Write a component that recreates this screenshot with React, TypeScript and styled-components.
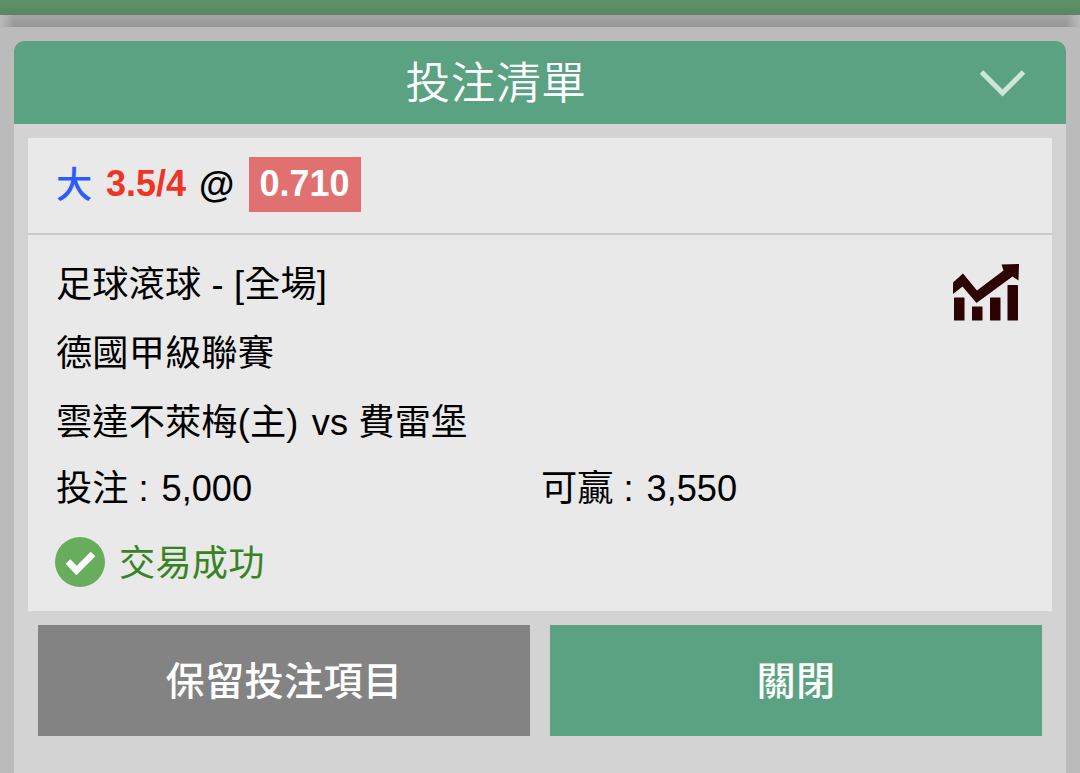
import React from 'react'
import styled, { createGlobalStyle } from 'styled-components'

const GlobalStyle = createGlobalStyle`
  * {
    box-sizing: border-box;
  }
  body {
    margin: 0;
    background: #bbb;
    color: #000;
    font-family: 'Liberation Sans', 'Noto Sans CJK TC', sans-serif;
  }
`

const Page = styled.div`
  height: 773px;
  overflow: hidden;
  display: flex;
  flex-direction: column;
`

const TopBar = styled.div`
  flex: none;
  height: 15px;
  background: linear-gradient(#5f9368, #588663);
`

const TopShadow = styled.div`
  flex: none;
  height: 12px;
  background: linear-gradient(90deg, #bbb 0, rgba(187, 187, 187, 0) 14px),
    linear-gradient(270deg, #bbb 0, rgba(187, 187, 187, 0) 14px),
    linear-gradient(#a5a5a5, #969696);
`

const Panel = styled.section`
  flex: 1;
  margin: 14px 14px 0;
  border-radius: 10px 10px 0 0;
  overflow: hidden;
  background: #d3d3d3;
`

const Header = styled.header`
  height: 83px;
  padding: 0 40px 0 0;
  display: flex;
  align-items: center;
  background: #5ba283;
  color: #fff;
`

const Title = styled.h1`
  flex: 1;
  margin: 0;
  padding-top: 1px;
  text-align: center;
  font-size: 44.6px;
  font-weight: 350;
  letter-spacing: 0.6px;
  line-height: 83px;
`

const Card = styled.div`
  height: 473px;
  margin: 14px 14px 0;
  background: #e9e9e9;
  font-size: 36.2px;
`

const Selection = styled.div`
  height: 97px;
  padding: 19px 28px 0;
  display: flex;
  align-items: flex-start;
  border-bottom: 2px solid #cbcbcb;
  line-height: 54px;
`

const Pick = styled.span`
  width: 50px;
  padding-top: 2px;
  color: #2a5cff;
  font-weight: 500;
`

const Handicap = styled.span`
  width: 93px;
  color: #ee3424;
  font-size: 36px;
  font-weight: bold;
`

const At = styled.span`
  width: 50px;
  padding-top: 1px;
  font-weight: bold;
`

const Odds = styled.span`
  width: 112px;
  height: 55px;
  padding-right: 1px;
  background: #e17070;
  color: #fff;
  font-size: 36px;
  font-weight: bold;
  text-align: center;
`

const Details = styled.div`
  padding: 11px 28px 0;
  display: flex;
  justify-content: space-between;
`

const Lines = styled.div`
  flex: 1;
  min-width: 0;
`

const Line = styled.div`
  display: flex;
  align-items: center;
  height: 69px;
  letter-spacing: 0.15px;
  white-space: pre;
`

const Away = styled.span`
  margin-left: 3px;
`

const Amounts = styled(Line)`
  height: 63px;
  letter-spacing: 0;
`

const Amount = styled.span`
  flex: none;
  width: 485px;

  &:last-child {
    width: auto;
  }

  b {
    margin-left: 3px;
    font-weight: normal;
  }
`

const Status = styled.div`
  display: flex;
  align-items: center;
  gap: 14px;
  height: 92px;
  color: #37831f;
  letter-spacing: 0.2px;

  span {
    padding-bottom: 4px;
  }
`

const ChartIcon = styled.svg`
  flex: none;
  margin: 18px 4px 0 0;
`

const CheckIcon = styled.svg`
  flex: none;
  margin-left: -1px;
`

const Actions = styled.div`
  display: flex;
  gap: 20px;
  padding: 14px 24px 0;
`

const Button = styled.button<{ $primary?: boolean }>`
  flex: 1;
  height: 111px;
  padding: 0 0 6px;
  border: 0;
  background: ${({ $primary }) => ($primary ? '#5ba283' : '#838383')};
  color: #fff;
  font-family: inherit;
  font-size: 39.2px;
  font-weight: 500;
  letter-spacing: 0.3px;
`

export default function App() {
  return (
    <>
      <GlobalStyle />
      <Page>
        <TopBar />
        <TopShadow />
        <Panel>
          <Header>
            <Title>投注清單</Title>
            <svg width="48" height="28" viewBox="0 0 48 28" fill="none">
              <path d="M3.5 3 L24.5 24 L45.5 3" stroke="#cfe5da" strokeWidth="5" />
            </svg>
          </Header>
          <Card>
            <Selection>
              <Pick>大</Pick>
              <Handicap>3.5/4</Handicap>
              <At>@</At>
              <Odds>0.710</Odds>
            </Selection>
            <Details>
              <Lines>
                <Line>足球滾球 - [全場]</Line>
                <Line>德國甲級聯賽</Line>
                <Line>
                  雲達不萊梅(主)<Away> vs 費雷堡</Away>
                </Line>
                <Amounts>
                  <Amount>
                    投注 :<b> 5,000</b>
                  </Amount>
                  <Amount>
                    可贏 :<b> 3,550</b>
                  </Amount>
                </Amounts>
                <Status>
                  <CheckIcon width="50" height="50" viewBox="0 0 50 50">
                    <circle cx="25" cy="25" r="25" fill="#67ad5b" />
                    <path d="M13 24.5 L21.5 33.5 L38 17" fill="none" stroke="#fff" strokeWidth="6.5" />
                  </CheckIcon>
                  <span>交易成功</span>
                </Status>
              </Lines>
              <ChartIcon width="67" height="58" viewBox="0 0 67 58" fill="#2c0302">
                <path d="M0 18.5 L10 9.5 L24 26.5 L50.5 6.5 L48.5 0.5 L66 0 L65.5 16.5 L59.5 12.5 L23.5 39 L9.5 22.5 L0 30 Z" />
                <rect x="1" y="33.5" width="10.5" height="23" rx="0.5" />
                <rect x="19" y="42.5" width="10.5" height="14" rx="0.5" />
                <rect x="37" y="33.5" width="10.5" height="23" rx="0.5" />
                <rect x="54.5" y="21" width="10.5" height="35.5" rx="0.5" />
              </ChartIcon>
            </Details>
          </Card>
          <Actions>
            <Button>保留投注項目</Button>
            <Button $primary>關閉</Button>
          </Actions>
        </Panel>
      </Page>
    </>
  )
}
